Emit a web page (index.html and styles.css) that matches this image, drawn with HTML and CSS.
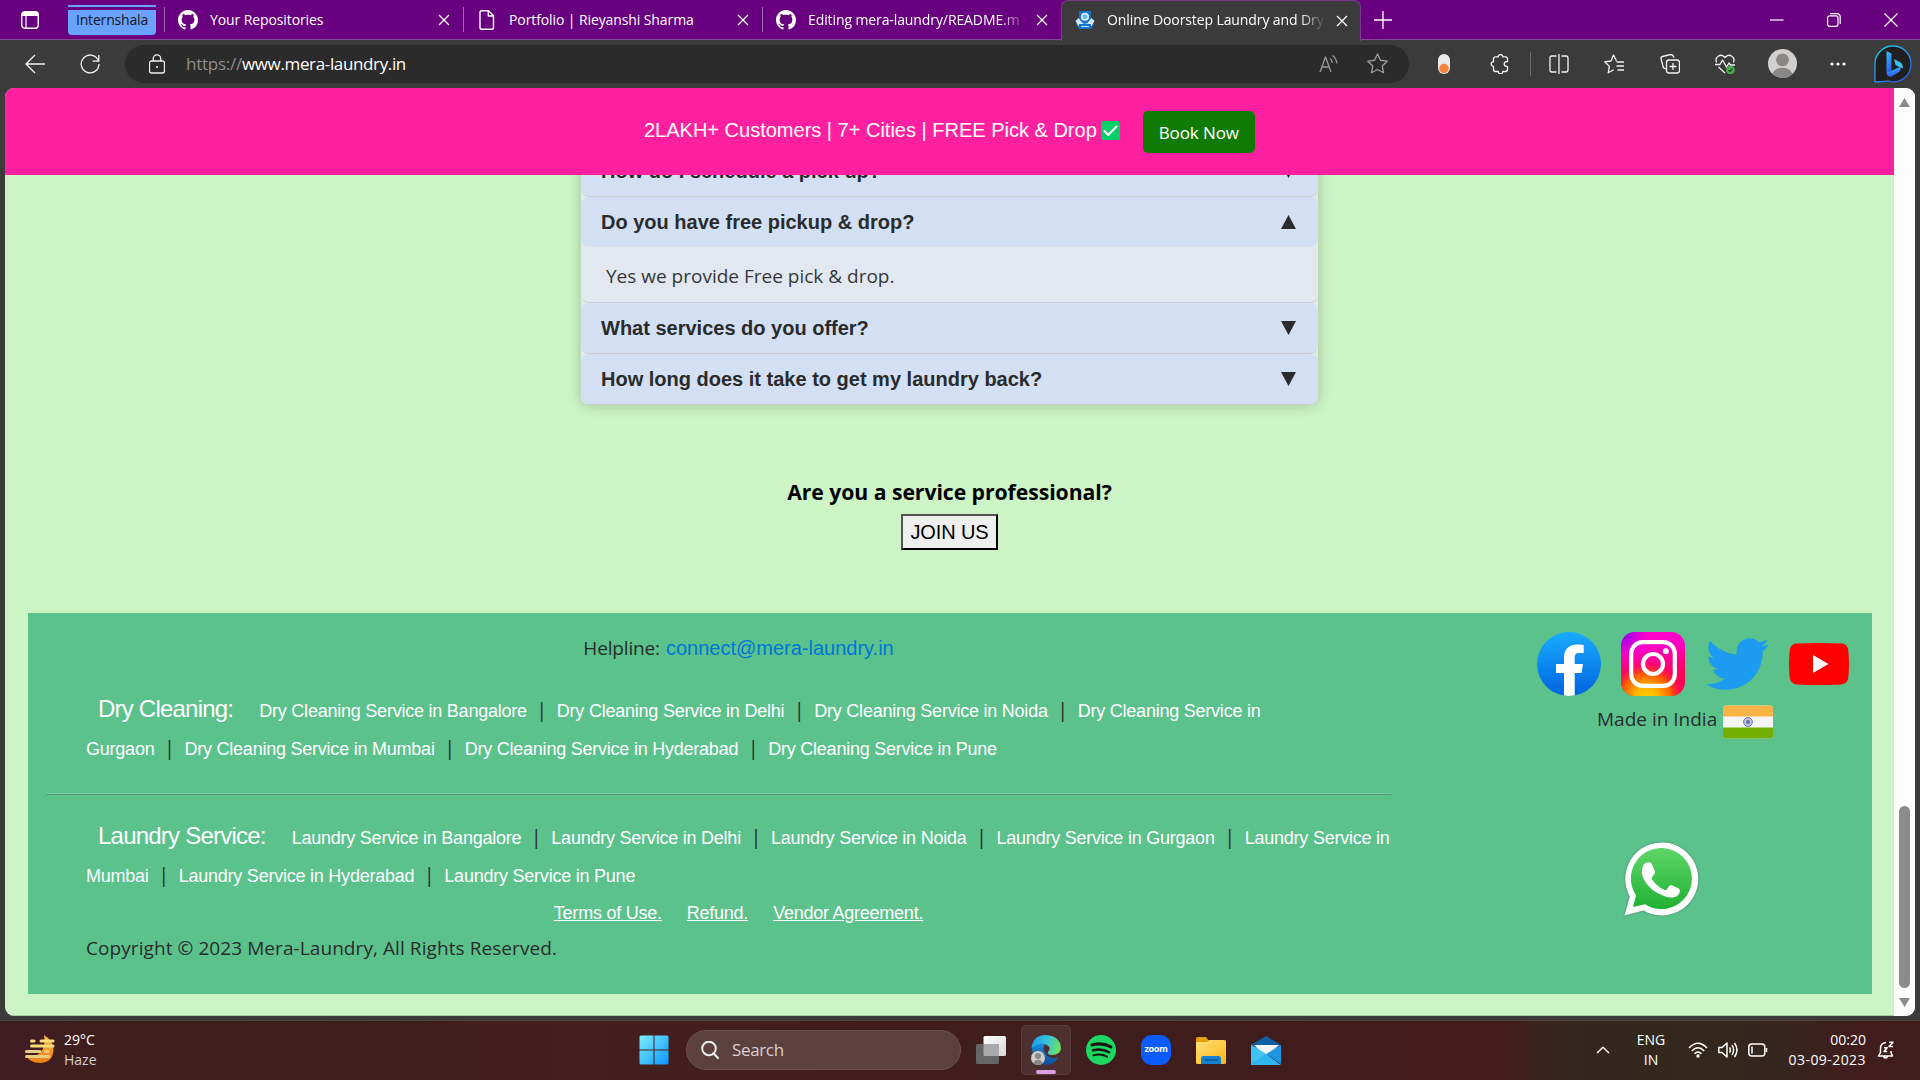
FILE: index.html
```html
<!DOCTYPE html>
<html lang="en">
<head>
<meta charset="utf-8">
<title>Online Doorstep Laundry and Dry Cleaning</title>
<link rel="stylesheet" href="styles.css">
</head>
<body>
<svg class="defs" aria-hidden="true">
  <symbol id="github" viewBox="0 0 16 16"><path fill="#fff" d="M8 0C3.58 0 0 3.58 0 8c0 3.54 2.29 6.53 5.47 7.59.4.07.55-.17.55-.38 0-.19-.01-.82-.01-1.49-2.01.37-2.53-.49-2.69-.94-.09-.23-.48-.94-.82-1.13-.28-.15-.68-.52-.01-.53.63-.01 1.08.58 1.23.82.72 1.21 1.87.87 2.33.66.07-.52.28-.87.51-1.07-1.78-.2-3.64-.89-3.64-3.95 0-.87.31-1.59.82-2.15-.08-.2-.36-1.02.08-2.12 0 0 .67-.21 2.2.82.64-.18 1.32-.27 2-.27s1.36.09 2 .27c1.53-1.04 2.2-.82 2.2-.82.44 1.1.16 1.92.08 2.12.51.56.82 1.27.82 2.15 0 3.07-1.87 3.75-3.65 3.95.29.25.54.73.54 1.48 0 1.07-.01 1.93-.01 2.2 0 .21.15.46.55.38A8.01 8.01 0 0 0 16 8c0-4.42-3.58-8-8-8z"/></symbol>
  <symbol id="close" viewBox="0 0 12 12"><path fill="none" stroke="#fff" stroke-width="1.3" d="M1 1l10 10M11 1L1 11"/></symbol>
</svg>

<div class="titlebar">
  <svg class="tab-actions" viewBox="0 0 18 18"><rect x=".75" y=".75" width="16.5" height="16.5" rx="3" fill="none" stroke="#fff" stroke-width="1.4"/><path fill="#fff" d="M1 5V3.500a2.500 2.500 0 0 1 2.500-2.500h11A2.500 2.500 0 0 1 17 3.500V5z"/><path stroke="#fff" stroke-width="1.200" d="M5 5v12"/></svg>
  <div class="group">Internshala</div>
  <div class="tab"><svg class="fav"><use href="#github"/></svg><span class="tab-text">Your Repositories</span><svg class="x"><use href="#close"/></svg></div>
  <div class="tab"><svg class="fav" viewBox="0 0 20 20"><path fill="none" stroke="#fff" stroke-width="1.400" stroke-linejoin="round" d="M4.500.8h7l5 5v12a1.500 1.500 0 0 1-1.500 1.500H4.500A1.500 1.500 0 0 1 3 17.800V2.300A1.500 1.500 0 0 1 4.500.8zM11.300 1v5h5"/></svg><span class="tab-text">Portfolio | Rieyanshi Sharma</span><svg class="x"><use href="#close"/></svg></div>
  <div class="tab"><svg class="fav"><use href="#github"/></svg><span class="tab-text fade">Editing mera-laundry/README.m</span><svg class="x"><use href="#close"/></svg></div>
  <div class="tab active"><svg class="fav" viewBox="0 0 20 20"><path fill="#1673c9" d="M4 1h12v9l3 4-3 5H4l-3-5 3-4z"/><path fill="#cfe9fb" d="M.5 11l3-3 4 5 2.500 1 2.500-1 4-5 3 3-3 5H3.500z"/><circle cx="10" cy="6.800" r="4" fill="#e6f4fd"/><circle cx="10" cy="6.800" r="2.500" fill="#72b9ec"/><path fill="#1673c9" d="M4 14h12v5H4z"/><path stroke="#bfe2fa" d="M6 16.500h8"/></svg><span class="tab-text fade">Online Doorstep Laundry and Dry</span><svg class="x"><use href="#close"/></svg></div>
  <svg class="plus" viewBox="0 0 18 18"><path stroke="#fff" stroke-width="1.300" d="M9 0v18M0 9h18"/></svg>
  <div class="win">
    <svg viewBox="0 0 14 14"><path stroke="#fff" stroke-width="1.200" d="M0 7h13.500"/></svg>
    <svg viewBox="0 0 14 14"><path fill="none" stroke="#fff" stroke-width="1.200" d="M2.500 2.800h6.500a2 2 0 0 1 2 2v6.500a2 2 0 0 1-2 2H2.600a2 2 0 0 1-2-2V4.800a2 2 0 0 1 2-2zM3 .7h7a3 3 0 0 1 3.200 3V11"/></svg>
    <svg viewBox="0 0 14 14"><path stroke="#fff" stroke-width="1.200" d="M.5.5l13 13M13.500.5l-13 13"/></svg>
  </div>
</div>

<div class="toolbar">
  <svg class="nav-icon" viewBox="0 0 20 20"><path d="M20 10H1M10 1L1 10l9 9"/></svg>
  <svg class="nav-icon" viewBox="0 0 20 20"><path d="M18.500 7A8.900 8.900 0 1 0 19 10M18.800 1v6.200h-6.200"/></svg>
  <div class="address">
    <svg class="lock" viewBox="0 0 16 20"><path d="M2.500 7h11a2 2 0 0 1 2 2v8a2 2 0 0 1-2 2h-11a2 2 0 0 1-2-2V9a2 2 0 0 1 2-2zM4.300 7V4.500a3.700 3.700 0 0 1 7.400 0V7"/><circle cx="8" cy="13" r="1" fill="#fff"/></svg>
    <div class="url"><span class="scheme">https://</span>www.mera-laundry.in</div>
    <svg class="dim read" viewBox="0 0 20 20"><path d="M1 18L6.500 3 12 18M3 13h7M11 4.500q2 1.500 2.200 4.500M13.500 1.500q4 3 4.300 8"/></svg>
    <svg class="dim star" viewBox="0 0 20 20"><path d="M10 1l2.800 5.900 6.400.9-4.700 4.500 1.200 6.500L10 15.700l-5.700 3.100 1.200-6.500L.8 7.800l6.400-.9z"/></svg>
  </div>
  <div class="tools">
    <svg viewBox="0 0 20 20"><rect x="4" y="0" width="12" height="20" rx="6" fill="#e9e9e9" stroke="none"/><circle cx="10" cy="14.500" r="4.700" fill="#f5813a" stroke="none"/></svg>
    <svg class="puzzle" viewBox="0 0 20 20"><path d="M5.500 2.800H8.200a2.300 2.300 0 0 1 4.600 0H15.500a2 2 0 0 1 2 2v2.900h-1a2.300 2.300 0 0 0 0 4.600h1v3.200a2 2 0 0 1-2 2h-2.700a2.300 2.300 0 0 1-4.600 0H5.500a2 2 0 0 1-2-2v-3.200a2.300 2.300 0 0 1 0-4.600V4.800a2 2 0 0 1 2-2z"/></svg>
    <i class="bar"></i>
    <svg viewBox="0 0 20 20"><path d="M10 0v20M7.500 2H3a2 2 0 0 0-2 2v12a2 2 0 0 0 2 2h4.500M12.500 2H17a2 2 0 0 1 2 2v12a2 2 0 0 1-2 2h-4.500"/></svg>
    <svg viewBox="0 0 20 20"><path d="M12.500 7L9.500 1 7 7l-6.300.8 4.700 4.600-1.200 6.400 5.500-3M12.500 8H20M12.500 12H20M13.500 16H20"/></svg>
    <svg viewBox="0 0 20 20"><path d="M6 14.500Q3.500 15 3 12.500L1 4.500Q.7 3 2.500 2.500l8-2Q13 .2 14 3.500M9 6h8a2.500 2.500 0 0 1 2.500 2.500v8A2.500 2.500 0 0 1 17 19H9a2.500 2.500 0 0 1-2.500-2.500v-8A2.500 2.500 0 0 1 9 6zM13 9v7M9.500 12.500h7"/></svg>
    <svg viewBox="0 0 20 20"><path d="M1.500 8.500C-.5 3 6-1.500 10 3.500c4-5 10.500-.5 8.500 5M0 10.500h5L7.500 6l4 7 2.500-4 1.500 2H20M3.500 13l6.500 6"/><circle cx="15.500" cy="16" r="4.300" fill="#4caf50" stroke="none"/><path d="M13.500 16l1.500 1.500 2.500-3" class="tick"/></svg>
    <svg class="avatar" viewBox="0 0 28 28"><clipPath id="av"><circle cx="14" cy="14" r="14"/></clipPath><g clip-path="url(#av)" stroke="none"><path fill="#d2d0ce" d="M0 0h28v28H0z"/><circle cx="14" cy="10.500" r="6.200" fill="#8a8886"/><ellipse cx="14" cy="26" rx="10" ry="8" fill="#8a8886"/></g></svg>
    <svg viewBox="0 0 20 20"><g fill="#fff" stroke="none"><circle cx="4" cy="10" r="1.600"/><circle cx="10" cy="10" r="1.600"/><circle cx="16" cy="10" r="1.600"/></g></svg>
    <svg class="bing" viewBox="0 0 38 38"><defs><linearGradient id="bg1" x1="0" y1="0" x2=".7" y2="1"><stop offset="0" stop-color="#1fd0e8"/><stop offset="1" stop-color="#2b62e8"/></linearGradient><linearGradient id="bg2" x1="0" y1="0" x2=".3" y2="1"><stop offset="0" stop-color="#38bdf8"/><stop offset="1" stop-color="#2b5cf0"/></linearGradient></defs><path d="M1 37V19a18 18 0 1 1 18 18q-5-1.500-10-.500z"/><path d="M12.500 6l5 2.500v17l-2 5.500-3-3z"/><path d="M13 28l13.500-6.500q1 4-3 6.500l-6 3.500q-3 1-4.500-2z"/><path d="M20 14l6.500 3.500q3 2.500 2 6L21.500 20z"/></svg>
  </div>
</div>

<div class="viewport">
  <div class="page">
    <header class="promo">
      <span class="promo-text">2LAKH+ Customers | 7+ Cities | FREE Pick &amp; Drop</span>
      <svg class="check" viewBox="0 0 19 19"><rect width="19" height="19" rx="2" fill="#07d069"/><path fill="none" stroke="#fff" stroke-width="2" stroke-linecap="round" stroke-linejoin="round" d="M3.500 10l3.700 4 8.300-8.500"/></svg>
      <a class="book">Book Now</a>
    </header>
    <main>
      <div class="faq">
        <div class="item"><div class="q">How do I schedule a pick up?<i class="arrow down"></i></div></div>
        <div class="item"><div class="q">Do you have free pickup &amp; drop?<i class="arrow up"></i></div><div class="a">Yes we provide Free pick &amp; drop.</div></div>
        <div class="item"><div class="q">What services do you offer?<i class="arrow down"></i></div></div>
        <div class="item"><div class="q">How long does it take to get my laundry back?<i class="arrow down"></i></div></div>
      </div>
      <section class="join">
        <h2>Are you a service professional?</h2>
        <button>JOIN US</button>
      </section>
    </main>
    <footer>
      <div class="links">
        <div class="help"><span class="seg">Helpline:</span> <a>connect@mera-laundry.in</a></div>
        <p><b>Dry Cleaning:</b><a>Dry Cleaning Service in Bangalore</a><i>|</i><a>Dry Cleaning Service in Delhi</a><i>|</i><a>Dry Cleaning Service in Noida</a><i>|</i><a>Dry Cleaning Service in<br>Gurgaon</a><i>|</i><a>Dry Cleaning Service in Mumbai</a><i>|</i><a>Dry Cleaning Service in Hyderabad</a><i>|</i><a>Dry Cleaning Service in Pune</a></p>
        <hr>
        <p><b>Laundry Service:</b><a>Laundry Service in Bangalore</a><i>|</i><a>Laundry Service in Delhi</a><i>|</i><a>Laundry Service in Noida</a><i>|</i><a>Laundry Service in Gurgaon</a><i>|</i><a>Laundry Service in<br>Mumbai</a><i>|</i><a>Laundry Service in Hyderabad</a><i>|</i><a>Laundry Service in Pune</a></p>
        <div class="legal"><a>Terms of Use.</a><a>Refund.</a><a>Vendor Agreement.</a></div>
        <div class="copy">Copyright © 2023 Mera-Laundry, All Rights Reserved.</div>
      </div>
      <div class="side">
        <div class="social">
          <svg viewBox="0 0 64 64"><defs><linearGradient id="fb" x2="0" y2="1"><stop offset="0" stop-color="#18acfe"/><stop offset="1" stop-color="#0163e0"/></linearGradient><clipPath id="fc"><circle cx="32" cy="32" r="32"/></clipPath></defs><circle cx="32" cy="32" r="32" fill="url(#fb)"/><path clip-path="url(#fc)" fill="#fff" d="M27 64V41h-8v-9h8v-6c0-9 5-13.500 13-13.500 3 0 5.300.3 6.700.5v8h-4.500c-3.500 0-4.500 2-4.500 4.500V32H46l-1.500 9h-6.800v23z"/></svg>
          <svg viewBox="0 0 64 64"><defs><radialGradient id="ig1" cx=".4" cy="1.050" r=".62"><stop offset="0" stop-color="#fc0"/><stop offset=".3" stop-color="#fdb900"/><stop offset=".65" stop-color="#ff5a00"/><stop offset="1" stop-color="#ff0060" stop-opacity="0"/></radialGradient><linearGradient id="ig2" x1=".5" y1="0" x2=".6" y2=".7"><stop offset="0" stop-color="#f0c"/><stop offset=".3" stop-color="#ff00c8"/><stop offset="1" stop-color="#ff0058"/></linearGradient><radialGradient id="ig3" cx="0" cy="0" r=".5"><stop offset="0" stop-color="#5a00ff"/><stop offset="1" stop-color="#f0c" stop-opacity="0"/></radialGradient></defs><rect width="64" height="64" rx="14" fill="url(#ig2)"/><rect width="64" height="64" rx="14" fill="url(#ig1)"/><rect width="64" height="64" rx="14" fill="url(#ig3)"/><g fill="none" stroke="#fff" stroke-width="4.200"><rect x="10.200" y="10.200" width="43.600" height="43.600" rx="11.500"/><circle cx="32" cy="32" r="10"/></g><circle cx="44.800" cy="19.200" r="3" fill="#fff"/></svg>
          <svg viewBox="0 0 64 64"><path transform="translate(0.800 .300) scale(2.640)" fill="#1d9bf0" d="M23.953 4.570a10 10 0 0 1-2.825.775 4.958 4.958 0 0 0 2.163-2.723c-.951.555-2.005.959-3.127 1.184a4.920 4.920 0 0 0-8.384 4.482C7.690 8.095 4.067 6.130 1.640 3.162a4.822 4.822 0 0 0-.666 2.475c0 1.710.870 3.213 2.188 4.096a4.904 4.904 0 0 1-2.228-.616v.060a4.923 4.923 0 0 0 3.946 4.827 4.996 4.996 0 0 1-2.212.085 4.936 4.936 0 0 0 4.604 3.417 9.867 9.867 0 0 1-6.102 2.105c-.390 0-.779-.023-1.170-.067a13.995 13.995 0 0 0 7.557 2.209c9.053 0 13.998-7.496 13.998-13.985 0-.210 0-.420-.015-.630A9.935 9.935 0 0 0 24 4.590z"/></svg>
          <svg viewBox="0 0 64 64"><path fill="red" d="M7.500 11.600Q30 10.400 52.500 11.600 58.600 12 59.300 18.500 60.700 32 59.300 45.500 58.600 52 52.500 52.400 30 53.600 7.500 52.400 1.400 52 .7 45.500-.7 32 .7 18.500 1.400 12 7.500 11.600z"/><path fill="#fff" d="M24 23v18l15.500-9z"/></svg>
        </div>
        <div class="made">Made in India<svg viewBox="0 0 50 34"><clipPath id="fl"><rect y=".5" width="50" height="33" rx="3.500"/></clipPath><g clip-path="url(#fl)"><path fill="#f5f5f5" d="M0 0h50v34H0z"/><path fill="#fab446" d="M0 0h50v11.500H0z"/><path fill="#73af00" d="M0 22.500h50V34H0z"/></g><circle cx="25" cy="17" r="4.400" fill="#c5c3e2" stroke="#6d6bb3" stroke-width="1"/><circle cx="25" cy="17" r="2" fill="#6d6bb3"/></svg></div>
      </div>
    </footer>
    <svg class="whatsapp" viewBox="0 0 76 76"><defs><linearGradient id="wa" x2="0" y2="1"><stop offset="0" stop-color="#5fd669"/><stop offset="1" stop-color="#1fb133"/></linearGradient></defs><path fill="#fff" d="M1.500 74.500L6.800 55.500A36.500 36.500 0 1 1 20.500 69.500z"/><path fill="url(#wa)" d="M10 66l3-11.500A30.500 30.500 0 1 1 22 63.300z"/><path fill="#fff" d="M20.500 24q2-3.500 6.500-2.500 1.500.3 2.200 2.300l2.700 6.500q.5 1.500-.7 3L29 36q-.8 1 0 2.300 4.500 7 12 10.500 1.500.7 2.500-.4l3-3.600q.9-1.100 2.400-.5l6.800 3.200q1.300.7 1.200 2.200-.4 4.300-4.300 6-4.500 2-11-.4Q27.500 50.500 20.800 38.500 17 30 20.500 24z"/></svg>
  </div>
  <div class="scroll"><i class="s-up"></i><i class="thumb"></i><i class="s-down"></i></div>
</div>

<div class="taskbar">
  <div class="weather">
    <svg viewBox="0 0 30 30"><defs><linearGradient id="sun" x2="0" y2="1"><stop offset="0" stop-color="#f7b53a"/><stop offset="1" stop-color="#f07e14"/></linearGradient></defs><path fill="url(#sun)" d="M19 0q10 6 9.500 15.500Q27.500 27 16 28 5 28.500 1 20q9 3 14.500-2.500Q21 11 19 0z"/><g stroke="#f8dc7a" stroke-width="3" stroke-linecap="round"><path d="M6.500 6H9M16 6h12M6.500 11H28"/><path stroke="#e8cd86" d="M1.500 16.500H15M20.500 16.500H23M1.500 21.500h22"/></g></svg>
    <div class="two"><span>29°C</span><span class="soft">Haze</span></div>
  </div>
  <div class="apps">
    <svg class="i30" viewBox="0 0 30 30"><defs><linearGradient id="wn" x2="1" y2="1"><stop offset="0" stop-color="#7df0ff"/><stop offset="1" stop-color="#0a95fb"/></linearGradient></defs><path fill="url(#wn)" d="M.5 2a1.500 1.500 0 0 1 1.500-1.500h12.500v14H.5zM15.500.5H28A1.500 1.500 0 0 1 29.500 2v12.500h-14zM.5 15.500h14v14H2A1.500 1.500 0 0 1 .5 28zM15.500 15.500h14V28a1.500 1.500 0 0 1-1.500 1.500H15.500z"/></svg>
    <div class="search"><svg viewBox="0 0 18 18"><circle cx="8" cy="7.500" r="6.800" fill="none" stroke="#eee" stroke-width="2"/><path stroke="#eee" stroke-width="2.200" stroke-linecap="round" d="M12.700 12.500L17 17"/></svg>Search</div>
    <svg class="i30" viewBox="0 0 30 30"><defs><linearGradient id="tv" x2="1" y2="1"><stop offset="0" stop-color="#fff"/><stop offset="1" stop-color="#d8d8d8"/></linearGradient></defs><rect x="7.500" y="1" width="22.500" height="20" rx="1.500" fill="url(#tv)"/><rect x="0" y="9" width="23" height="20" rx="1.500" fill="#666"/><path fill="#aaa" d="M7.500 9H23v12H9q-1.500 0-1.500-1.500z"/></svg>
    <div class="edge"><svg class="i30" viewBox="0 0 30 30"><defs><linearGradient id="e1" x1="0" y1=".3" x2="1" y2=".5"><stop offset="0" stop-color="#1c9de4"/><stop offset=".5" stop-color="#35c1df"/><stop offset="1" stop-color="#6ee35c"/></linearGradient><linearGradient id="e2" x2="0" y2="1"><stop offset="0" stop-color="#1f8fdd"/><stop offset="1" stop-color="#0f4f9e"/></linearGradient></defs><path fill="url(#e2)" d="M1 10Q9 5 14 9q-3 4 0 9 4 7 13 4.500Q23 30 15 30 0 28 1 10z"/><path fill="url(#e1)" d="M.5 13Q2 0 15 0q14 1 15 13-.5 7-9 7-5 0-4-3 3-3 .5-6Q11 5 .5 13z"/><circle cx="7" cy="23" r="7" fill="#cfcdca"/><circle cx="7" cy="21" r="3" fill="#8a8886"/><path fill="#8a8886" d="M2 28q5-7 10 0-5 4-10 0z"/></svg></div>
    <svg class="i30" viewBox="0 0 30 30"><circle cx="15" cy="15" r="15" fill="#1ed760"/><g fill="none" stroke="#191414" stroke-linecap="round"><path stroke-width="3" d="M6 10q10-3 19 2"/><path stroke-width="2.500" d="M7 15.300q8.500-2.500 16 2"/><path stroke-width="2" d="M7.500 20.200q7.500-2 13.500 1.500"/></g></svg>
    <div class="zoom">zoom</div>
    <svg class="i30" viewBox="0 0 30 30"><defs><linearGradient id="fo" x2="1" y2="1"><stop offset="0" stop-color="#ffe07a"/><stop offset="1" stop-color="#fbb714"/></linearGradient></defs><path fill="#e2a008" d="M0 3.500Q0 2 1.500 2H10l2.500 3.500H16V12H0z"/><path fill="url(#fo)" d="M0 7h11l2-2h15.500Q30 5 30 6.500v21q0 1.500-1.500 1.500h-27Q0 29 0 27.500z"/><path fill="#1681d0" d="M5 29v-5.500q0-2.500 2.500-2.500h15q2.500 0 2.500 2.500V29z"/><path stroke="#0a4a86" stroke-width="1.200" d="M9 25h13"/></svg>
    <svg class="i30 mail" viewBox="0 0 30 30"><path fill="#0f5ea8" d="M0 10L15 1l15 9v8H0z"/><path fill="#f5f5f5" d="M3 10h25L15 22z"/><path fill="#2fb6f0" d="M0 10l15 9 15 11H0z"/><path fill="#1f96e0" d="M30 10v19L15 19z"/><path fill="#3fc3f5" d="M0 10l15 9L0 29z"/></svg>
  </div>
  <div class="tray">
    <svg class="chev" viewBox="0 0 14 8"><path d="M1 7l6-5.800L13 7"/></svg>
    <div class="two mid"><span>ENG</span><span>IN</span></div>
    <svg class="wifi" viewBox="0 0 20 16"><path d="M1 6Q10-3.500 19 6M3.800 9Q10 2.500 16.200 9M6.500 11.800Q10 8 13.500 11.800"/><circle cx="10" cy="14" r="1.700" fill="#fff" stroke="none"/></svg>
    <svg class="vol" viewBox="0 0 20 18"><path d="M.8 6.500H4L9 2v14l-5-4.500H.8zM11.500 6.300q1.800 2.700 0 5.400M14 4.200q3.200 4.800 0 9.600M16.500 2q5 7 0 14"/></svg>
    <svg class="bat" viewBox="0 0 20 14"><rect x=".8" y="1" width="16" height="12" rx="3"/><path d="M18.500 5v4"/><path stroke-width="3" d="M4 3.500v7"/></svg>
    <div class="two end"><span>00:20</span><span class="date">03-09-2023</span></div>
    <svg class="bell" viewBox="0 0 18 18"><path d="M9 1.500Q3.500 2 3.500 7.500v4L1.500 15h14L14 11.500V10M6.500 15.500q2 3 4 0M7 6.800h3.200L7 10.500h3.200M12 1.200h4L12 5.500h4"/></svg>
  </div>
</div>
</body>
</html>
```
FILE: styles.css
```css
* { box-sizing: border-box; }
body {
  margin: 0;
  width: 1920px;
  height: 1080px;
  overflow: hidden;
  display: flex;
  flex-direction: column;
  background: #3b3b3b;
  font-family: "Open Sans", "Noto Sans", sans-serif;
}
svg { display: block; flex: none; }
.defs { position: absolute; width: 0; height: 0; }

/* Title bar */
.titlebar {
  flex: none;
  height: 40px;
  display: flex;
  align-items: center;
  padding-left: 21px;
  background: #68007f;
  border-bottom: 1px solid #86459a;
  color: #fff;
  font-size: 14px;
  letter-spacing: -0.1px;
}
.tab-actions { width: 18px; height: 18px; }
.group {
  width: 88px;
  height: 30px;
  margin: 1px 8px 0 29px;
  padding-top: 5px;
  line-height: 20px;
  text-align: center;
  color: #10161f;
  background: linear-gradient(#6aa2fb 0 2px, transparent 2px 5px, #6aa2fb 5px);
  border-radius: 0 0 4px 4px;
  letter-spacing: -0.18px;
}
.tab {
  width: 299px;
  height: 25px;
  flex: none;
  display: flex;
  align-items: center;
  padding: 0 13px 0 13px;
  border-left: 1px solid #a366b2;
}
.tab .fav { width: 20px; height: 20px; }
.tab-text { flex: 1; margin: 0 12px; white-space: nowrap; overflow: hidden; line-height: 22px; }
.tab-text.fade { margin-right: 10px; -webkit-mask: linear-gradient(90deg, #000 88%, transparent); mask: linear-gradient(90deg, #000 88%, transparent); }
.tab .x { width: 12px; height: 12px; margin-top: 1px; }
.tab.active {
  width: 300px;
  height: 41px;
  margin-bottom: -2px;
  padding: 0 12px 2px 13px;
  background: #3b3b3b;
  border: 1px solid #7d3a90;
  border-bottom: 0;
  border-radius: 7px 7px 0 0;
}
.plus { width: 18px; height: 18px; margin-left: 13px; }
.win { display: flex; gap: 43px; margin: 0 22px 0 auto; }
.win svg { width: 14px; height: 14px; }

/* Toolbar */
.toolbar {
  flex: none;
  height: 48px;
  display: flex;
  align-items: center;
  padding: 0 0 1px 25px;
}
.toolbar path { fill: none; stroke: #f2f2f2; stroke-width: 1.3; stroke-linejoin: round; }
.nav-icon { width: 20px; height: 20px; margin-right: 35px; }
.nav-icon + .nav-icon { margin-right: 25px; }
.address {
  width: 1284px;
  height: 38px;
  border-radius: 19px;
  background: #2b2b2b;
  display: flex;
  align-items: center;
  padding: 0 21px 0 24px;
}
.lock { width: 16px; height: 20px; }
.url { flex: 1; margin-left: 21px; font-size: 17px; letter-spacing: -0.36px; color: #fff; line-height: 24px; }
.scheme { color: #8f8f8f; letter-spacing: -0.25px; }
.address .dim path { stroke: #9b9b9b; }
.read { width: 20px; height: 20px; margin-right: 28px; }
.star { width: 21px; height: 21px; }
.tools { display: flex; align-items: center; margin-left: 25px; }
.tools svg { width: 20px; height: 20px; margin: 0 17.700px 0 17.700px; }
.tools svg:first-child { margin-left: 0; margin-right: 18px; }
.tools svg.puzzle { margin-right: 20px; }
.tools .bar { width: 1.500px; height: 24px; background: #6a6a6a; }
.tools svg.avatar { width: 29px; height: 29px; margin: 0 14px 0 15px; }
.tools svg.bing { width: 38px; height: 38px; margin: 0 0 0 8px; }
.toolbar .avatar path { fill: #d2d0ce; stroke: none; }
.toolbar .tick { stroke: #1c4a1e; }
.toolbar .bing path { fill: #1f1f1f; stroke: url(#bg1); }
.toolbar .bing path:nth-of-type(n+2) { fill: url(#bg2); stroke: none; }
.toolbar .bing path:last-of-type { fill: #35c5ee; }

/* Page */
.viewport {
  flex: none;
  width: 1910px;
  height: 928px;
  margin-left: 5px;
  display: flex;
  border-radius: 9px;
  overflow: hidden;
  background: #cdf4c5;
}
.page { position: relative; width: 1889px; display: flex; flex-direction: column; border-bottom: 1px solid #a9c9a3; }
.promo {
  flex: none;
  height: 87px;
  display: flex;
  align-items: center;
  padding: 1px 0 0 639px;
  background: #ff20a0;
  color: #fff;
  position: relative;
  z-index: 1;
}
.promo-text { font: 20px/30px "Liberation Sans", Arial, sans-serif; margin-top: -5px; }
.check { width: 19px; height: 19px; margin: -4px 23px 0 4px; }
.book { width: 112px; height: 42px; border-radius: 5px; background: #0f7b04; font-size: 17px; line-height: 43px; text-align: center; letter-spacing: -0.1px; }
main { height: 438px; flex: none; display: flex; flex-direction: column; align-items: center; padding-top: 0; }
.faq {
  width: 737px;
  margin: -29px 0 0 0;
  background: #e3e8f0;
  border-radius: 8px;
  box-shadow: 0 0 14px rgba(0, 0, 0, .22);
}
.item { border-bottom: 1px solid #c9ccd0; border-radius: 8px; }
.q {
  height: 50px;
  padding: 0 22px 0 20px;
  display: flex;
  align-items: center;
  justify-content: space-between;
  background: #d3dff3;
  border-radius: 8px;
  color: #292b2c;
  font: bold 20px/50px "Liberation Sans", Arial, sans-serif;
}
.arrow { width: 15px; height: 14px; background: #292b2c; clip-path: polygon(0 0, 100% 0, 50% 100%); }
.arrow.up { clip-path: polygon(50% 0, 100% 100%, 0 100%); }
.a { height: 55px; padding: 1px 0 0 25px; line-height: 57px; font-size: 19px; color: #35383a; }
.join { margin-top: 70px; display: flex; flex-direction: column; align-items: center; }
.join h2 { margin: 0; font-size: 21.200px; line-height: 34px; font-weight: 700; color: #000; letter-spacing: -0.05px; }
.join button {
  width: 97px;
  height: 36px;
  margin-top: 5px;
  padding: 0;
  background: #efefef;
  border: 2px solid #000;
  border-color: #555 #000 #000 #555;
  font: 20px "Liberation Sans", Arial, sans-serif;
  letter-spacing: -0.1px;
  color: #000;
}

/* Footer */
footer {
  flex: none;
  width: 1844px;
  height: 381px;
  margin-left: 23px;
  background: #5bc28c;
  display: flex;
  color: #292b2c;
}
.links { width: 1363px; padding: 16px 0 0 58px; }
.help { height: 38px; line-height: 38px; font-size: 19px; text-align: center; }
.help .seg { letter-spacing: -0.15px; }
.help a { margin-left: 1px; font: 20px/1 "Liberation Sans", Arial, sans-serif; color: #0275d8; }
.links p { margin: 25px 0 0; font: 18px/38px "Liberation Sans", Arial, sans-serif; letter-spacing: -0.23px; color: #fff; white-space: nowrap; }
.links hr { margin: 25px 0 0 -40px; width: 1345px; height: 2px; border: 0; background: linear-gradient(#79cca1 50%, #4c9a76 50%); }
.links hr + p { margin-top: 24px; }
.links p b { margin: 0 26px 0 12px; font-weight: 400; font-size: 24px; line-height: 0; letter-spacing: -0.78px; }
.links p i { display: inline-block; width: 30px; text-align: center; font: normal 20px/0 "Open Sans", sans-serif; letter-spacing: 0; color: #292b2c; }
.legal { height: 37px; display: flex; justify-content: center; gap: 25px; font: 18px/37px "Liberation Sans", Arial, sans-serif; letter-spacing: -0.24px; color: #fff; }
.legal a { text-decoration: underline; }
.copy { font-size: 19px; line-height: 32px; letter-spacing: 0.076px; }
.side { padding: 19px 0 0 146px; }
.social { display: flex; gap: 20px; }
.social svg { width: 64px; height: 64px; }
.made { display: flex; align-items: center; margin: 7px 0 0 60px; font-size: 19px; line-height: 32px; }
.made svg { width: 50px; height: 34px; margin: 2px 0 0 6px; }
.made { align-items: flex-start; }
.whatsapp { position: absolute; left: 1618px; top: 753px; width: 76px; height: 76px; filter: drop-shadow(0 0 1px rgba(0, 0, 0, .35)); }
.scroll { width: 21px; background: #fcfcfc; display: flex; flex-direction: column; align-items: center; padding: 10px 0 9px; }
.s-up { width: 11px; height: 9px; background: #8a8a8a; clip-path: polygon(50% 0, 100% 100%, 0 100%); }
.s-down { width: 11px; height: 9px; background: #8a8a8a; clip-path: polygon(0 0, 100% 0, 50% 100%); margin-top: 10px; }
.thumb { width: 11px; height: 182px; margin-top: auto; border-radius: 6px; background: #8b8b8b; }

/* Taskbar */
.taskbar {
  flex: none;
  height: 60px;
  margin-top: 4px;
  padding-bottom: 2px;
  display: flex;
  align-items: center;
  border-top: 1px solid #544343;
  background: linear-gradient(90deg, #3f1d24 0, #3f1f1c 110px, #3d1e1d 350px, #431f1e 560px, #3f1d1d 1200px, #431d1a 1500px, #33271e 1570px, #33281b 1720px, #37241f 1790px, #411d1d 1860px, #3f1d1d);
  color: #fff;
}
.taskbar .two { display: flex; flex-direction: column; font-size: 14px; line-height: 20px; }
.weather { width: 639px; display: flex; align-items: center; padding-left: 25px; }
.weather svg { width: 30px; height: 30px; margin-right: 9px; }
.soft { color: #d4cbcb; }
.apps { display: flex; align-items: center; }
.i30 { width: 30px; height: 30px; }
.search {
  width: 275px;
  height: 40px;
  margin: 0 15px 0 17px;
  padding: 0 14px;
  display: flex;
  align-items: center;
  gap: 13px;
  border-radius: 20px;
  background: #5b403f;
  border: 1px solid #6b5150;
  color: #d9d0d0;
  font-size: 17px;
  letter-spacing: -0.35px;
}
.search svg { width: 18px; height: 18px; }
.edge {
  position: relative;
  width: 50px;
  height: 50px;
  margin: 0 15px;
  padding: 9px;
  border-radius: 5px;
  background: #4e2f2f;
  border: 1px solid #5a3b3b;
}
.edge::after { content: ""; position: absolute; left: 14px; bottom: 0; width: 20px; height: 4px; border-radius: 2px; background: #dc9fe2; }
.zoom {
  width: 30px;
  height: 30px;
  margin: 0 25px;
  border-radius: 11px;
  background: #0b5cff;
  font: 700 9px/28px "Open Sans", sans-serif;
  text-align: center;
  letter-spacing: -0.3px;
}
.apps .mail { margin-left: 25px; }
.tray { flex: 1; display: flex; align-items: center; padding-left: 315px; }
.tray path, .tray rect { fill: none; stroke: #fff; stroke-width: 1.5; stroke-linejoin: round; }
.chev { width: 14px; height: 8px; margin-right: 27px; }
.mid { width: 28px; text-align: center; align-items: center; margin-right: 23px; }
.wifi { width: 20px; height: 16px; margin-right: 10px; }
.vol { width: 20px; height: 18px; margin-right: 10px; }
.bat { width: 20px; height: 14px; margin-right: 20px; }
.end { width: 78px; align-items: flex-end; margin-right: 11px; }
.date { letter-spacing: 0.44px; }
.bell { width: 18px; height: 18px; }
```
